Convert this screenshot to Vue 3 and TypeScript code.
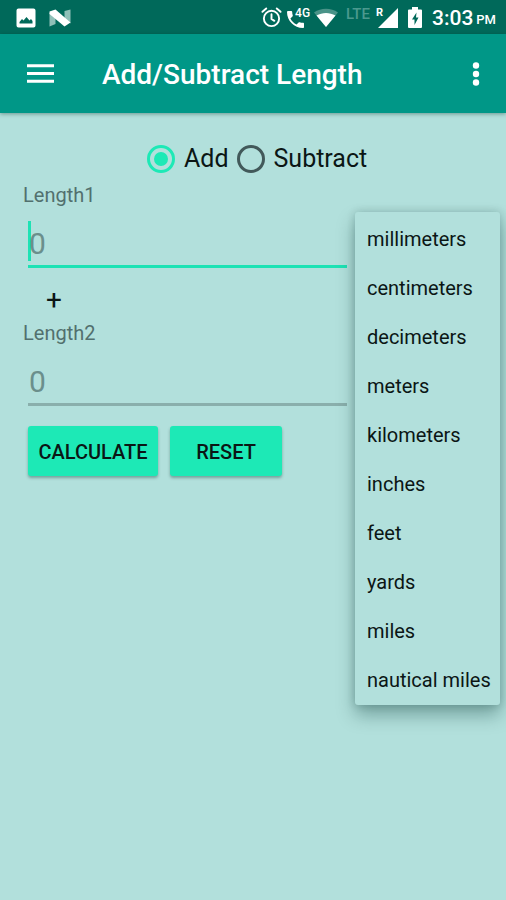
<script setup lang="ts">
import { ref } from 'vue'

type Operation = 'add' | 'subtract'

const units: string[] = [
  'millimeters',
  'centimeters',
  'decimeters',
  'meters',
  'kilometers',
  'inches',
  'feet',
  'yards',
  'miles',
  'nautical miles',
]

const operation = ref<Operation>('add')
const length1 = ref('')
const length2 = ref('')
const unit = ref('meters')

function reset(): void {
  length1.value = ''
  length2.value = ''
}

function calculate(): void {
  const sign = operation.value === 'add' ? 1 : -1
  length1.value = String(Number(length1.value) + sign * Number(length2.value))
  length2.value = ''
}
</script>

<template>
  <div class="screen">
    <div class="status">
      <svg class="i-photo" viewBox="0 0 20 20" aria-hidden="true">
        <path fill="#fff" fill-rule="evenodd" d="M2.500 0.500h15a2 2 0 0 1 2 2v15a2 2 0 0 1-2 2h-15a2 2 0 0 1-2-2v-15a2 2 0 0 1 2-2zM3.500 15.500h13v-2.500l-1.500-2-1.500 1.500-3-3.500-3 3.500-1.500-1.500-2.500 3z" />
      </svg>
      <svg class="i-n" viewBox="0 0 22 18" aria-hidden="true">
        <path fill="#8fc0b8" d="M0.500 4l6 3v8l-6 2.500zM15.500 2l6-1.500v14l-6-4z" />
        <path fill="#fff" d="M0.500 2.500L6.500 0.500l15 13-6 4L0.500 5z" />
      </svg>
      <span class="spacer"></span>
      <svg class="i-alarm" viewBox="0 0 22 22" aria-hidden="true">
        <g fill="none" stroke="#fff" stroke-width="2" stroke-linecap="round">
          <circle cx="11" cy="12" r="8" />
          <path d="M11 7.500v5l3 2M1.500 5l4-3.500M20.500 5l-4-3.500" />
        </g>
      </svg>
      <span class="call">
        <svg class="i-phone" viewBox="0 0 18 18" aria-hidden="true">
          <path fill="#fff" d="M1 0h3.500a1 1 0 0 1 1 1c0 1.300.2 2.500.6 3.600.1.400 0 .8-.3 1.100L3.600 7.900c1.500 2.900 3.700 5.100 6.500 6.500l2.200-2.200c.3-.3.700-.4 1.100-.3 1.100.4 2.300.6 3.600.6.500 0 1 .4 1 1V17c0 .6-.5 1-1 1C7.600 18 0 10.400 0 1c0-.6.400-1 1-1z" />
        </svg>
        <span class="net4g">4G</span>
      </span>
      <svg class="i-wifi" viewBox="0 0 24 20" aria-hidden="true">
        <path fill="#4a9388" d="M0 4.500C7-0.500 17-0.500 24 4.500L12 19z" />
        <path fill="#fff" d="M2.500 7.500c6-3.500 13-3.500 19 0L12 19z" />
      </svg>
      <span class="lte">LTE</span>
      <span class="signal">
        <span class="roam">R</span>
        <svg class="i-signal" viewBox="0 0 20 20" aria-hidden="true">
          <path fill="#fff" d="M20 0v20H0z" />
        </svg>
      </span>
      <svg class="i-battery" viewBox="0 0 14 21" aria-hidden="true">
        <path fill="#fff" d="M4 0h6v2.500h3a1 1 0 0 1 1 1V20a1 1 0 0 1-1 1H1a1 1 0 0 1-1-1V3.500a1 1 0 0 1 1-1h3z" />
        <path fill="#00695a" d="M8.500 5.500L4 12.500h2.500V18l4-7.500H8z" />
      </svg>
      <span class="clock">3:03</span>
      <span class="pm">PM</span>
    </div>

    <header class="bar">
      <button class="icon-button" type="button" aria-label="Open navigation">
        <svg class="i-menu" viewBox="0 0 28 20" aria-hidden="true">
          <path fill="#fff" d="M0 0h28v3H0zM0 8h28v3H0zM0 16h28v3H0z" />
        </svg>
      </button>
      <h1>Add/Subtract Length</h1>
      <button class="icon-button" type="button" aria-label="More options">
        <svg class="i-more" viewBox="0 0 8 24" aria-hidden="true">
          <g fill="#fff">
            <circle cx="4" cy="3.500" r="3.200" />
            <circle cx="4" cy="12" r="3.200" />
            <circle cx="4" cy="20.500" r="3.200" />
          </g>
        </svg>
      </button>
    </header>

    <main>
      <form @submit.prevent="calculate">
        <div class="choices">
          <label><input v-model="operation" type="radio" name="operation" value="add" />Add</label>
          <label><input v-model="operation" type="radio" name="operation" value="subtract" />Subtract</label>
        </div>

        <label class="name" for="length1">Length1</label>
        <div class="field active">
          <input id="length1" v-model="length1" type="text" inputmode="decimal" placeholder="0" />
        </div>

        <div class="sign">{{ operation === 'add' ? '+' : '−' }}</div>

        <label class="name" for="length2">Length2</label>
        <div class="field">
          <input id="length2" v-model="length2" type="text" inputmode="decimal" placeholder="0" />
        </div>

        <div class="actions">
          <button class="calculate" type="submit">CALCULATE</button>
          <button class="reset" type="button" @click="reset">RESET</button>
        </div>
      </form>

      <ul class="units">
        <li v-for="name in units" :key="name">
          <button type="button" :aria-pressed="name === unit" @click="unit = name">{{ name }}</button>
        </li>
      </ul>
    </main>
  </div>
</template>

<style>
body {
  margin: 0;
  background: #b2e0dc;
}
</style>

<style scoped>
.screen {
  min-height: 100vh;
  overflow: hidden;
  background: #b2e0dc;
  color: #0b1615;
  font-family: Roboto, "Liberation Sans", sans-serif;
}

.screen *,
.screen {
  box-sizing: border-box;
}

svg {
  display: block;
  flex: none;
}

button,
input {
  font: inherit;
  color: inherit;
}

button {
  border: 0;
  background: none;
  cursor: pointer;
}

.status {
  display: flex;
  align-items: center;
  height: 34px;
  padding: 1px 10px 0 16px;
  background: #00695a;
  color: #fff;
  line-height: 20px;
}

.spacer {
  flex: 1;
}

.i-photo {
  width: 20px;
  height: 20px;
}

.i-n {
  width: 22px;
  height: 18px;
  margin-left: 13px;
}

.i-alarm {
  width: 21px;
  height: 21px;
}

.call {
  display: flex;
  align-items: flex-start;
  width: 22px;
  height: 22px;
  margin-left: 5px;
}

.i-phone {
  width: 17px;
  height: 17px;
  margin-top: 4px;
}

.net4g {
  margin-left: -9px;
  font-size: 12px;
  font-weight: 500;
  line-height: 12px;
}

.i-wifi {
  width: 24px;
  height: 20px;
  margin-left: 5px;
}

.lte {
  height: 28px;
  margin-left: 8px;
  color: #4a998e;
  font-size: 15px;
  font-weight: 500;
  line-height: 20px;
}

.signal {
  display: flex;
  align-items: flex-start;
  height: 22px;
  margin-left: 6px;
}

.roam {
  width: 2px;
  font-size: 11px;
  font-weight: 700;
  line-height: 12px;
}

.i-signal {
  width: 20px;
  height: 20px;
  margin-top: 1px;
}

.i-battery {
  width: 14px;
  height: 21px;
  margin-left: 10px;
}

.clock {
  margin-left: 10px;
  font-size: 21px;
  font-weight: 500;
}

.pm {
  margin-left: 3px;
  padding-top: 4px;
  font-size: 13px;
  font-weight: 500;
}

.bar {
  position: relative;
  display: flex;
  align-items: center;
  height: 79px;
  padding: 0 16px;
  background: #009787;
  box-shadow: 0 1px 4px rgba(0, 40, 30, 0.4);
  color: #fff;
}

.icon-button {
  display: grid;
  place-items: center;
  width: 48px;
  height: 48px;
  padding: 0;
}

.bar .icon-button:last-child {
  width: 28px;
}

.i-menu {
  width: 27px;
  height: 20px;
}

.i-more {
  width: 8px;
  height: 24px;
}

h1 {
  flex: 1;
  margin: 0;
  padding: 2px 0 0 38px;
  font-size: 28px;
  font-weight: 500;
  line-height: 36px;
}

main {
  position: relative;
}

form {
  padding: 28px 159px 0 23px;
}

.choices {
  display: flex;
  gap: 8px;
  padding-left: 124px;
  font-size: 25px;
  line-height: 36px;
}

.choices label {
  display: flex;
  align-items: center;
  gap: 9px;
}

.choices input {
  display: grid;
  flex: none;
  place-items: center;
  width: 28px;
  height: 28px;
  margin: 0;
  border: 3px solid #42595a;
  border-radius: 50%;
  appearance: none;
}

.choices input:checked {
  border-color: #1de9b6;
}

.choices input:checked::before {
  width: 14px;
  height: 14px;
  border-radius: 50%;
  background: #1de9b6;
  content: "";
}

.name {
  display: block;
  margin-top: 4px;
  color: #52706e;
  font-size: 20px;
  line-height: 28px;
}

.field {
  display: flex;
  height: 59px;
  margin: 0 0 0 5px;
  padding: 12px 0 4px;
  border-bottom: 3px solid #8aafac;
}

.field.active {
  border-color: #1de2b4;
}

.field.active::before {
  width: 3px;
  margin-right: -3px;
  background: #1de2b4;
  content: "";
}

.field input {
  width: 100%;
  min-width: 0;
  padding: 4px 1px 0;
  border: 0;
  outline: 0;
  background: none;
  font-size: 30px;
}

.field input::placeholder {
  color: #6b8f8c;
  opacity: 1;
}

.sign {
  margin: 18px 0 5px 23px;
  font-size: 28px;
  line-height: 28px;
}

.actions {
  display: flex;
  gap: 12px;
  margin: 20px 0 0 5px;
}

.actions button {
  height: 50px;
  padding: 1px 0 0;
  border-radius: 3px;
  background: #1de9b6;
  box-shadow: 0 2px 3px rgba(0, 50, 40, 0.35);
  font-size: 20px;
  font-weight: 500;
}

.calculate {
  width: 130px;
}

.reset {
  width: 112px;
}

.units {
  position: absolute;
  top: 99px;
  right: 6px;
  width: 145px;
  margin: 0;
  padding: 2px 0 1px;
  border-radius: 3px;
  background: #b2e0dc;
  box-shadow: 0 10px 18px rgba(0, 50, 45, 0.35), 0 0 8px rgba(0, 50, 45, 0.2);
  list-style: none;
}

.units button {
  display: block;
  width: 100%;
  height: 49px;
  padding: 0 0 0 12px;
  font-size: 20px;
  text-align: left;
  white-space: nowrap;
}
</style>
